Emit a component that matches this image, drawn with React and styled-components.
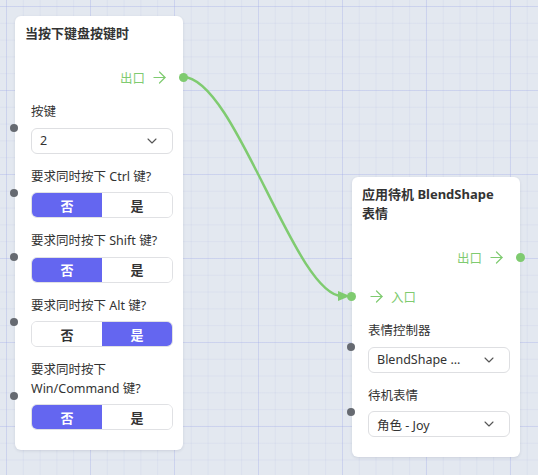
import React from 'react'
import styled, {createGlobalStyle} from 'styled-components';
import {ArrowRight, ChevronDown} from 'lucide-react';

const GlobalStyle = createGlobalStyle`
    html, body {
        margin: 0;
        padding: 0;
    }
    body {
        font-family: "Noto Sans", "Noto Sans CJK SC", sans-serif;
        color: #333;
    }
`;

const GREEN = '#7fcb70';
const PURPLE = '#6466f0';

const Canvas = styled.div`
    position: relative;
    width: 538px;
    height: 475px;
    overflow: hidden;
    background-color: #e3e8f0;
    background-image:
        linear-gradient(to right, rgba(165, 175, 235, 0.28) 1px, transparent 1px),
        linear-gradient(to bottom, rgba(165, 175, 235, 0.28) 1px, transparent 1px),
        linear-gradient(to right, rgba(175, 185, 225, 0.16) 1px, transparent 1px),
        linear-gradient(to bottom, rgba(175, 185, 225, 0.16) 1px, transparent 1px);
    background-size: 84px 84px, 84px 84px, 16.8px 16.8px, 16.8px 16.8px;
    background-position: 6px 6px, 6px 6px, 6px 6px, 6px 6px;
`;

const Wires = styled.svg`
    position: absolute;
    left: 0;
    top: 0;
    pointer-events: none;
`;

const NodeCard = styled.div`
    position: absolute;
    left: ${p => p.$x}px;
    top: ${p => p.$y}px;
    width: 168px;
    background: #fff;
    border-radius: 6px;
    box-shadow: 0 1px 3px rgba(40, 50, 80, 0.12);
`;

const NodeTitle = styled.div`
    padding: 8px 10px 0;
    font-size: 13px;
    line-height: 19px;
    font-weight: 700;
    color: #333;
`;

const PortList = styled.div`
    display: flex;
    flex-direction: column;
    gap: 21px;
    padding: 25px 0 17px;
`;

const PortRow = styled.div`
    position: relative;
    height: 18px;
    display: flex;
    align-items: center;
    gap: 5px;
    justify-content: ${p => p.$out ? 'flex-end' : 'flex-start'};
    padding: ${p => p.$out ? '0 14px 0 0' : '0 0 0 15px'};
    color: ${GREEN};
    font-size: 12.5px;
`;

const PortDot = styled.span`
    position: absolute;
    top: 50%;
    width: 9px;
    height: 9px;
    margin-top: -4.5px;
    border-radius: 50%;
    background: ${p => p.$color};
    ${p => p.$out ? 'right: -4.5px;' : 'left: -5px;'}
`;

const FieldList = styled.div`
    display: flex;
    flex-direction: column;
    gap: 14px;
    padding: 0 10px 20px 16px;
`;

const Field = styled.div`
    position: relative;
    display: flex;
    flex-direction: column;
    gap: 6px;
`;

const FieldLabel = styled.div`
    font-size: 12.5px;
    line-height: 18.5px;
    color: #333;
`;

const FieldDot = styled.span`
    position: absolute;
    left: -21px;
    top: 50%;
    width: 8px;
    height: 8px;
    margin-top: -4px;
    border-radius: 50%;
    background: #666a71;
`;

const SelectBox = styled.div`
    height: 26px;
    box-sizing: border-box;
    border: 1px solid #dedfe2;
    border-radius: 6px;
    display: flex;
    align-items: center;
    justify-content: space-between;
    padding: 0 12px 0 8px;
    font-size: 12.5px;
    color: #333;
    white-space: nowrap;

    svg {
        color: #555;
        flex-shrink: 0;
    }
`;

const Toggle = styled.div`
    height: 26px;
    box-sizing: border-box;
    border: 1px solid #e0e1e4;
    border-radius: 6px;
    overflow: hidden;
    display: grid;
    grid-template-columns: 1fr 1fr;
`;

const ToggleOption = styled.div`
    display: flex;
    align-items: center;
    justify-content: center;
    font-size: 13px;
    font-weight: 700;
    background: ${p => p.$active ? PURPLE : '#fff'};
    color: ${p => p.$active ? '#fff' : '#333'};
`;

const YesNo = ({value}) => <Toggle>
    <ToggleOption $active={!value}>否</ToggleOption>
    <ToggleOption $active={value}>是</ToggleOption>
</Toggle>

const keyFields = [
    {label: '要求同时按下 Ctrl 键?', value: false},
    {label: '要求同时按下 Shift 键?', value: false},
    {label: '要求同时按下 Alt 键?', value: true},
    {label: <>要求同时按下<br/>Win/Command 键?</>, value: false},
];

const App = () => {
    return <>
        <GlobalStyle/>
        <Canvas>
            <Wires width="538" height="475">
                <path d="M183 77 C 235 77, 295 296, 342 296" fill="none" stroke={GREEN} strokeWidth="2.5"/>
                <polygon points="338,291 350,296 338,301" fill={GREEN}/>
            </Wires>

            <NodeCard $x={15} $y={16}>
                <NodeTitle>当按下键盘按键时</NodeTitle>
                <PortList>
                    <PortRow $out>
                        出口 <ArrowRight size={19} strokeWidth={1.5}/>
                        <PortDot $out $color={GREEN}/>
                    </PortRow>
                </PortList>
                <FieldList>
                    <Field>
                        <FieldDot/>
                        <FieldLabel>按键</FieldLabel>
                        <SelectBox>2 <ChevronDown size={16} strokeWidth={1.6}/></SelectBox>
                    </Field>
                    {keyFields.map((f, i) => <Field key={i}>
                        <FieldDot/>
                        <FieldLabel>{f.label}</FieldLabel>
                        <YesNo value={f.value}/>
                    </Field>)}
                </FieldList>
            </NodeCard>

            <NodeCard $x={352} $y={177}>
                <NodeTitle>应用待机 BlendShape 表情</NodeTitle>
                <PortList>
                    <PortRow $out>
                        出口 <ArrowRight size={19} strokeWidth={1.5}/>
                        <PortDot $out $color={GREEN}/>
                    </PortRow>
                    <PortRow>
                        <PortDot $color={GREEN}/>
                        <ArrowRight size={19} strokeWidth={1.5}/> 入口
                    </PortRow>
                </PortList>
                <FieldList>
                    <Field>
                        <FieldDot/>
                        <FieldLabel>表情控制器</FieldLabel>
                        <SelectBox>BlendShape ... <ChevronDown size={16} strokeWidth={1.6}/></SelectBox>
                    </Field>
                    <Field>
                        <FieldDot/>
                        <FieldLabel>待机表情</FieldLabel>
                        <SelectBox>角色 - Joy <ChevronDown size={16} strokeWidth={1.6}/></SelectBox>
                    </Field>
                </FieldList>
            </NodeCard>
        </Canvas>
    </>
}

export default App;
